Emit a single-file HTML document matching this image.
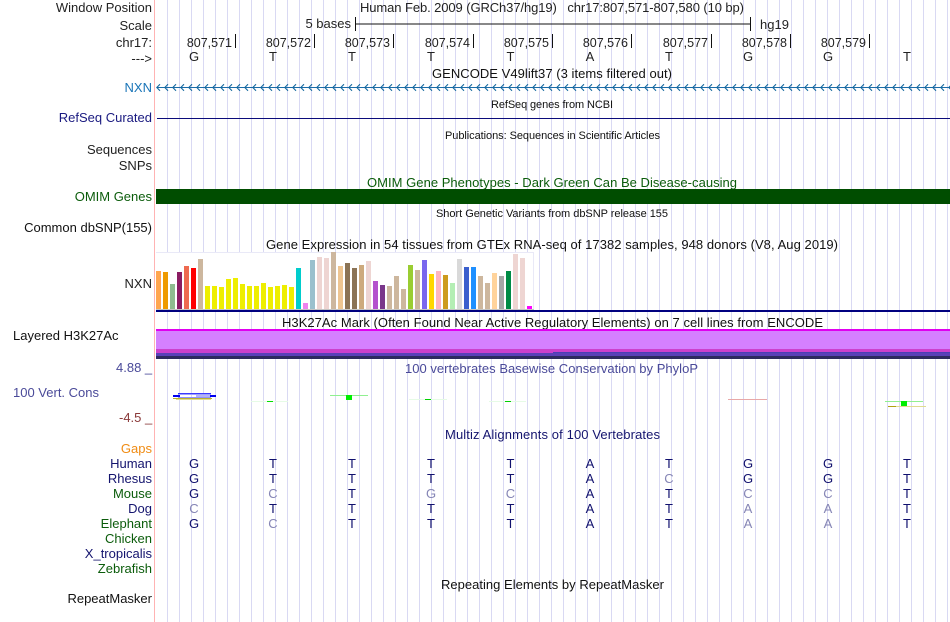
<!DOCTYPE html>
<html><head><meta charset="utf-8">
<style>
html,body{margin:0;padding:0;background:#fff;width:950px;height:622px;overflow:hidden}
svg{display:block}
text{font-family:"Liberation Sans",sans-serif;font-size:13px;fill:#222}
.p{font-size:12.5px;text-anchor:end}
.r{text-anchor:end}
.m{text-anchor:middle}
.s{font-size:11px;fill:#111}
.b{fill:#11116e}
.l{fill:#8585b5}
.n{fill:#14146e}
.g{fill:#0b5c0b}
</style></head><body>
<svg width="950" height="622" viewBox="0 0 950 622" xmlns="http://www.w3.org/2000/svg">
<defs>
<pattern id="grid" x="167" y="0" width="12" height="622" patternUnits="userSpaceOnUse"><rect x="0" y="0" width="1" height="622" fill="#d9d9f3"/></pattern>
<pattern id="arw" x="156" y="83" width="8" height="9" patternUnits="userSpaceOnUse"><path d="M4 1.2 L0.8 4.5 L4 7.8" fill="none" stroke="#14689f" stroke-width="1.1"/></pattern>
</defs>
<rect x="160" y="0" width="790" height="622" fill="url(#grid)"/>
<rect x="154" y="0" width="1" height="622" fill="#ffb3b3"/>

<!-- left labels -->
<text class="r" x="152" y="12">Window Position</text>
<text class="r" x="152" y="30">Scale</text>
<text class="r" x="152" y="47">chr17:</text>
<text class="r" x="152" y="63">---&gt;</text>
<text class="r" x="152" y="92" style="fill:#1a75b8">NXN</text>
<text class="r" x="152" y="122" style="fill:#1a1a80">RefSeq Curated</text>
<text class="r" x="152" y="154">Sequences</text>
<text class="r" x="152" y="170">SNPs</text>
<text class="r" x="152" y="201" style="fill:#0b5c0b">OMIM Genes</text>
<text class="r" x="152" y="232" style="fill:#111">Common dbSNP(155)</text>
<text class="r" x="152" y="288">NXN</text>
<text x="13" y="340" style="fill:#111">Layered H3K27Ac</text>
<text x="116" y="372" style="fill:#4a4a99">4.88 _</text>
<text x="13" y="397" style="fill:#4a4a99">100 Vert. Cons</text>
<text x="119" y="422" style="fill:#8b3a3a">-4.5 _</text>
<text class="r" x="152" y="453" style="fill:#f08c14">Gaps</text>
<text class="r n" x="152" y="468">Human</text>
<text class="r n" x="152" y="483">Rhesus</text>
<text class="r g" x="152" y="498">Mouse</text>
<text class="r n" x="152" y="513">Dog</text>
<text class="r g" x="152" y="528">Elephant</text>
<text class="r g" x="152" y="543">Chicken</text>
<text class="r n" x="152" y="558">X_tropicalis</text>
<text class="r g" x="152" y="573">Zebrafish</text>
<text class="r" x="152" y="603" style="fill:#111">RepeatMasker</text>

<!-- header -->
<text x="360" y="12" textLength="384" xml:space="preserve">Human Feb. 2009 (GRCh37/hg19)   chr17:807,571-807,580 (10 bp)</text>
<text class="r" x="351" y="28">5 bases</text>
<text x="760" y="29">hg19</text>
<path d="M355.5 17V31M355 24H751M750.5 17V31" stroke="#111" fill="none"/>
<g>
<text class="p" x="232" y="47">807,571</text><rect x="235" y="34" width="1" height="14" fill="#111"/>
<text class="p" x="311" y="47">807,572</text><rect x="314" y="34" width="1" height="14" fill="#111"/>
<text class="p" x="390" y="47">807,573</text><rect x="393" y="34" width="1" height="14" fill="#111"/>
<text class="p" x="470" y="47">807,574</text><rect x="473" y="34" width="1" height="14" fill="#111"/>
<text class="p" x="549" y="47">807,575</text><rect x="552" y="34" width="1" height="14" fill="#111"/>
<text class="p" x="628" y="47">807,576</text><rect x="631" y="34" width="1" height="14" fill="#111"/>
<text class="p" x="708" y="47">807,577</text><rect x="711" y="34" width="1" height="14" fill="#111"/>
<text class="p" x="787" y="47">807,578</text><rect x="790" y="34" width="1" height="14" fill="#111"/>
<text class="p" x="866" y="47">807,579</text><rect x="869" y="34" width="1" height="14" fill="#111"/>
</g>
<g class="bases">
<text class="m" x="194" y="61">G</text><text class="m" x="273" y="61">T</text><text class="m" x="352" y="61">T</text><text class="m" x="431" y="61">T</text><text class="m" x="510.5" y="61">T</text><text class="m" x="590" y="61">A</text><text class="m" x="669" y="61">T</text><text class="m" x="748" y="61">G</text><text class="m" x="828" y="61">G</text><text class="m" x="907" y="61">T</text>
</g>

<!-- titles -->
<text x="432" y="78" textLength="240" style="fill:#111">GENCODE V49lift37 (3 items filtered out)</text>
<rect x="157" y="87" width="793" height="1" fill="#1a6ca8"/>
<rect x="156" y="83" width="794" height="9" fill="url(#arw)"/>
<text class="s" x="491" y="108" textLength="122">RefSeq genes from NCBI</text>
<rect x="157" y="118" width="793" height="1" fill="#0b0b7a"/>
<text class="s" x="445" y="139" textLength="215">Publications: Sequences in Scientific Articles</text>
<text x="367" y="187" textLength="370" style="fill:#0b5c0b">OMIM Gene Phenotypes - Dark Green Can Be Disease-causing</text>
<rect x="156" y="189" width="794" height="15" fill="#004d00"/>
<text class="s" x="436" y="217" textLength="232">Short Genetic Variants from dbSNP release 155</text>
<text x="266" y="249" textLength="572" style="fill:#111">Gene Expression in 54 tissues from GTEx RNA-seq of 17382 samples, 948 donors (V8, Aug 2019)</text>

<!-- GTEx -->
<rect x="156" y="252" width="378" height="58" fill="#fff"/>
<rect x="156" y="252" width="378" height="1" fill="#e9e9f7"/>
<rect x="533" y="252" width="1" height="58" fill="#e9e9f7"/>
<g>
<rect x="156" y="271" width="5" height="38" fill="#FFA54F"/>
<rect x="163" y="272" width="5" height="37" fill="#EE9A00"/>
<rect x="170" y="284" width="5" height="25" fill="#8FBC8F"/>
<rect x="177" y="272" width="5" height="37" fill="#8B1C62"/>
<rect x="184" y="266" width="5" height="43" fill="#EE6A50"/>
<rect x="191" y="268" width="5" height="41" fill="#FF0000"/>
<rect x="198" y="259" width="5" height="50" fill="#CDB79E"/>
<rect x="205" y="286" width="5" height="23" fill="#EEEE00"/>
<rect x="212" y="286" width="5" height="23" fill="#EEEE00"/>
<rect x="219" y="287" width="5" height="22" fill="#EEEE00"/>
<rect x="226" y="279" width="5" height="30" fill="#EEEE00"/>
<rect x="233" y="278" width="5" height="31" fill="#EEEE00"/>
<rect x="240" y="284" width="5" height="25" fill="#EEEE00"/>
<rect x="247" y="286" width="5" height="23" fill="#EEEE00"/>
<rect x="254" y="286" width="5" height="23" fill="#EEEE00"/>
<rect x="261" y="283" width="5" height="26" fill="#EEEE00"/>
<rect x="268" y="287" width="5" height="22" fill="#EEEE00"/>
<rect x="275" y="286" width="5" height="23" fill="#EEEE00"/>
<rect x="282" y="285" width="5" height="24" fill="#EEEE00"/>
<rect x="289" y="287" width="5" height="22" fill="#EEEE00"/>
<rect x="296" y="268" width="5" height="41" fill="#00CDCD"/>
<rect x="303" y="303" width="5" height="6" fill="#EE82EE"/>
<rect x="310" y="260" width="5" height="49" fill="#9AC0CD"/>
<rect x="317" y="257" width="5" height="52" fill="#EED5D2"/>
<rect x="324" y="258" width="5" height="51" fill="#EED5D2"/>
<rect x="331" y="252" width="5" height="57" fill="#CDB79E"/>
<rect x="338" y="266" width="5" height="43" fill="#EEC591"/>
<rect x="345" y="263" width="5" height="46" fill="#8B7355"/>
<rect x="352" y="268" width="5" height="41" fill="#8B7355"/>
<rect x="359" y="265" width="5" height="44" fill="#CDAA7D"/>
<rect x="366" y="261" width="5" height="48" fill="#EED5D2"/>
<rect x="373" y="281" width="5" height="28" fill="#B452CD"/>
<rect x="380" y="285" width="5" height="24" fill="#7A378B"/>
<rect x="387" y="286" width="5" height="23" fill="#CDB79E"/>
<rect x="394" y="276" width="5" height="33" fill="#CDB79E"/>
<rect x="401" y="289" width="5" height="20" fill="#CDB79E"/>
<rect x="408" y="265" width="5" height="44" fill="#9ACD32"/>
<rect x="415" y="270" width="5" height="39" fill="#CDB79E"/>
<rect x="422" y="260" width="5" height="49" fill="#7A67EE"/>
<rect x="429" y="274" width="5" height="35" fill="#FFD700"/>
<rect x="436" y="271" width="5" height="38" fill="#FFB6C1"/>
<rect x="443" y="275" width="5" height="34" fill="#CD9B1D"/>
<rect x="450" y="283" width="5" height="26" fill="#B4EEB4"/>
<rect x="457" y="259" width="5" height="50" fill="#D9D9D9"/>
<rect x="464" y="267" width="5" height="42" fill="#3A5FCD"/>
<rect x="471" y="267" width="5" height="42" fill="#1E90FF"/>
<rect x="478" y="276" width="5" height="33" fill="#CDB79E"/>
<rect x="485" y="283" width="5" height="26" fill="#CDB79E"/>
<rect x="492" y="273" width="5" height="36" fill="#FFD39B"/>
<rect x="499" y="276" width="5" height="33" fill="#A6A6A6"/>
<rect x="506" y="271" width="5" height="38" fill="#008B45"/>
<rect x="513" y="254" width="5" height="55" fill="#EED5D2"/>
<rect x="520" y="258" width="5" height="51" fill="#EED5D2"/>
<rect x="527" y="306" width="5" height="3" fill="#FF00FF"/>
</g>
<rect x="156" y="309" width="378" height="1" fill="#c4c4c4"/>
<rect x="156" y="310" width="794" height="2" fill="#000080"/>

<!-- H3K27Ac -->
<text x="282" y="327" textLength="541" style="fill:#111">H3K27Ac Mark (Often Found Near Active Regulatory Elements) on 7 cell lines from ENCODE</text>
<rect x="156" y="329" width="794" height="2" fill="#e000f0"/>
<rect x="156" y="331" width="794" height="18" fill="#d580ff"/>
<rect x="156" y="349" width="794" height="3" fill="#cc40cc"/>
<rect x="156" y="352" width="397" height="1" fill="#cc40cc"/>
<rect x="553" y="352" width="397" height="1" fill="#4a3fb5"/>
<rect x="156" y="353" width="794" height="3" fill="#5a40b8"/>
<rect x="156" y="356" width="794" height="3" fill="#2e2a5e"/>

<!-- PhyloP -->
<text x="405" y="373" textLength="293" style="fill:#4a4a99">100 vertebrates Basewise Conservation by PhyloP</text>
<g>
<rect x="173" y="395" width="7" height="2" fill="#0000f0"/>
<rect x="209" y="395" width="7" height="2" fill="#0000f0"/>
<rect x="178" y="393" width="33" height="1" fill="#3a3aff"/>
<rect x="178" y="394" width="33" height="1" fill="#a0a0ff"/>
<rect x="178" y="397" width="33" height="1" fill="#9090ff"/>
<rect x="196" y="395" width="14" height="2" fill="#b4b4f4"/>
<rect x="173" y="398" width="39" height="1" fill="#b8b030"/>
<rect x="176" y="399" width="35" height="1" fill="#e0dc90"/>
<rect x="251" y="401" width="37" height="1" fill="#e6fbe6"/>
<rect x="267" y="401" width="6" height="1" fill="#00e000"/>
<rect x="330" y="395" width="38" height="1" fill="#90f090"/>
<rect x="346" y="395" width="6" height="5" fill="#00ee00"/>
<rect x="409" y="399" width="38" height="1" fill="#e6fbe6"/>
<rect x="425" y="399" width="6" height="1" fill="#00d000"/>
<rect x="489" y="401" width="37" height="1" fill="#e6fbe6"/>
<rect x="505" y="401" width="6" height="1" fill="#00d000"/>
<rect x="728" y="399" width="39" height="1" fill="#e8a8a8"/>
<rect x="885" y="401" width="38" height="1" fill="#90f090"/>
<rect x="901" y="401" width="6" height="5" fill="#00ee00"/>
<rect x="888" y="406" width="38" height="1" fill="#e0dc90"/>
<rect x="888" y="406" width="8" height="1" fill="#b0a010"/>
</g>

<!-- Multiz -->
<text x="445" y="439" textLength="215" style="fill:#14146e">Multiz Alignments of 100 Vertebrates</text>
<g>
<text class="m b" x="194" y="468">G</text><text class="m b" x="273" y="468">T</text><text class="m b" x="352" y="468">T</text><text class="m b" x="431" y="468">T</text><text class="m b" x="510.5" y="468">T</text><text class="m b" x="590" y="468">A</text><text class="m b" x="669" y="468">T</text><text class="m b" x="748" y="468">G</text><text class="m b" x="828" y="468">G</text><text class="m b" x="907" y="468">T</text>
<text class="m b" x="194" y="483">G</text><text class="m b" x="273" y="483">T</text><text class="m b" x="352" y="483">T</text><text class="m b" x="431" y="483">T</text><text class="m b" x="510.5" y="483">T</text><text class="m b" x="590" y="483">A</text><text class="m l" x="669" y="483">C</text><text class="m b" x="748" y="483">G</text><text class="m b" x="828" y="483">G</text><text class="m b" x="907" y="483">T</text>
<text class="m b" x="194" y="498">G</text><text class="m l" x="273" y="498">C</text><text class="m b" x="352" y="498">T</text><text class="m l" x="431" y="498">G</text><text class="m l" x="510.5" y="498">C</text><text class="m b" x="590" y="498">A</text><text class="m b" x="669" y="498">T</text><text class="m l" x="748" y="498">C</text><text class="m l" x="828" y="498">C</text><text class="m b" x="907" y="498">T</text>
<text class="m l" x="194" y="513">C</text><text class="m b" x="273" y="513">T</text><text class="m b" x="352" y="513">T</text><text class="m b" x="431" y="513">T</text><text class="m b" x="510.5" y="513">T</text><text class="m b" x="590" y="513">A</text><text class="m b" x="669" y="513">T</text><text class="m l" x="748" y="513">A</text><text class="m l" x="828" y="513">A</text><text class="m b" x="907" y="513">T</text>
<text class="m b" x="194" y="528">G</text><text class="m l" x="273" y="528">C</text><text class="m b" x="352" y="528">T</text><text class="m b" x="431" y="528">T</text><text class="m b" x="510.5" y="528">T</text><text class="m b" x="590" y="528">A</text><text class="m b" x="669" y="528">T</text><text class="m l" x="748" y="528">A</text><text class="m l" x="828" y="528">A</text><text class="m b" x="907" y="528">T</text>
</g>
<text x="441" y="589" textLength="223" style="fill:#111">Repeating Elements by RepeatMasker</text>
</svg>
</body></html>
